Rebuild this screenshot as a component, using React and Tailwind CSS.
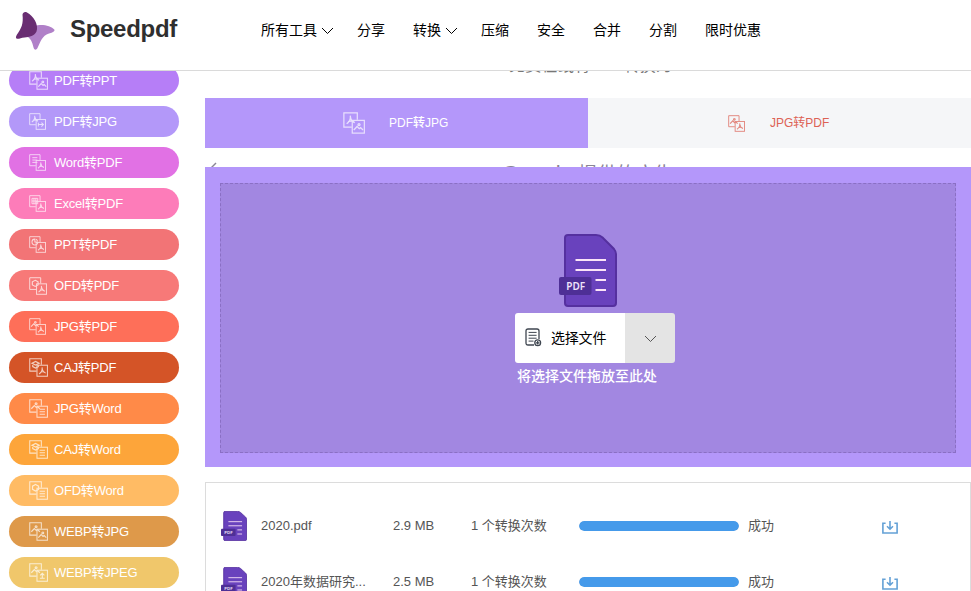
const tools = [
  { name: 'PDF转PPT', color: 'bg-[#b67ef7]', from: 'pdf', to: 'image', size: 19 },
  { name: 'PDF转JPG', color: 'bg-[#b398f9]', from: 'pdf', to: 'arrow', size: 17 },
  { name: 'Word转PDF', color: 'bg-[#e171e4]', from: 'doc', to: 'pdf', size: 17 },
  { name: 'Excel转PDF', color: 'bg-[#fd7cb9]', from: 'excel', to: 'pdf', size: 17 },
  { name: 'PPT转PDF', color: 'bg-[#f27476]', from: 'ppt', to: 'pdf', size: 17 },
  { name: 'OFD转PDF', color: 'bg-[#f77978]', from: 'ofd', to: 'pdf', size: 18 },
  { name: 'JPG转PDF', color: 'bg-[#fe6f59]', from: 'image', to: 'pdf', size: 17 },
  { name: 'CAJ转PDF', color: 'bg-[#d45427]', from: 'caj', to: 'pdf', size: 19 },
  { name: 'JPG转Word', color: 'bg-[#ff8a48]', from: 'image', to: 'doc', size: 19 },
  { name: 'CAJ转Word', color: 'bg-[#fda53a]', from: 'caj', to: 'doc', size: 19 },
  { name: 'OFD转Word', color: 'bg-[#ffbb64]', from: 'ofd', to: 'doc', size: 19 },
  { name: 'WEBP转JPG', color: 'bg-[#de994a]', from: 'image', to: 'image', size: 19 },
  { name: 'WEBP转JPEG', color: 'bg-[#f0c76b]', from: 'image', to: 'jpeg', size: 19 },
];

const files = [
  { name: '2020.pdf', size: '2.9 MB', progress: 100 },
  { name: '2020年数据研究...', size: '2.5 MB', progress: 100 },
];

// Marks drawn inside a 10x10 square
const glyphs = {
  pdf: <path d="M1.6 8.4 C3.6 7 5.2 4 4.8 1.4 M4.8 2.4 C5.2 5 6.6 6.8 8.6 7.4 M2.8 6.8 C4.5 5.8 6.2 5.8 8 6.8" strokeWidth="1.2" />,
  doc: <path d="M2.2 2.4 H7.8 M2.2 5 H7.8 M2.2 7.6 H7.8" />,
  excel: <path d="M1.8 2 H8.2 V8 H1.8 Z M1.8 5 H8.2 M4 2 V8 M6.1 2 V8" />,
  ppt: <path d="M5 1.8 A3.2 3.2 0 1 0 8.2 5 H5 Z M6.4 1.8 L8 3.6" strokeWidth="1.2" />,
  ofd: <path d="M5 1.8 L8 3.4 V6.6 L5 8.2 L2 6.6 V3.4 Z" strokeWidth="1.2" />,
  caj: <path d="M1.4 3.6 L5 1.8 L8.6 3.6 L5 5.4 Z M2.2 5.2 V6.8 L5 8.2 L7.8 6.8 V5.2" strokeWidth="1.2" />,
  image: <path d="M0.8 8 L3.8 4.8 L5.8 6.8 L7 5.8 L9.2 8 M5.6 2.2 A0.9 0.9 0 1 1 5.5 2.2" strokeWidth="1.2" />,
  arrow: <path d="M2 5.2 H7.8 M5.6 2.8 L8 5.2 L5.6 7.6 M2 3 V7.4" strokeWidth="1.2" />,
  jpeg: <path d="M2.4 7.6 H7.6 M5 2.4 V7.6 M2.8 4.6 L5 2.4 L7.2 4.6" strokeWidth="1.2" />,
};

const ConvertIcon = ({ from, to, size = 19, className = '' }) => (
  <svg
    width={size}
    height={size}
    viewBox="0 0 20 20"
    fill="none"
    stroke="currentColor"
    strokeWidth="1.1"
    className={className}
  >
    <path d="M8 13.8 H0.8 V0.8 H13 V7" />
    <g transform="translate(1.6 1.8) scale(1.06)">{glyphs[from]}</g>
    <rect x="8.4" y="7.6" width="11" height="11.6" />
    <g transform="translate(9 8.4)">{glyphs[to]}</g>
  </svg>
);

const Logo = () => (
  <svg width="41" height="40" viewBox="0 0 41 40" className="shrink-0">
    <path
      d="M20 15 C25 12.8 36 14 39.5 18.8 C40 20.3 38 21.5 34 22.5 C27 24.5 25.5 31 22.5 37 C21.3 39.2 19.5 39.2 18.7 37 C17.5 33 17 29 13 26 Z"
      fill="#b080c8"
    />
    <path
      d="M7.5 3.5 C8 1 10 .4 12 1.4 C18.5 5 24 13.5 21.5 20.5 C19.5 25 14.5 26 9.5 26.5 C6 26.8 4.5 28 2 27.8 C.5 27.3 .7 25.5 2 23.5 C6.5 17 8.5 13 7.5 3.5 Z"
      fill="#692d72"
    />
  </svg>
);

const Chevron = ({ className = '' }) => (
  <svg width="13" height="8" viewBox="0 0 13 8" fill="none" stroke="currentColor" className={className}>
    <path d="M1 1 L6.5 6.5 L12 1" />
  </svg>
);

const PdfFile = ({ width, height }) => (
  <svg width={width} height={height} viewBox="0 0 58 73" preserveAspectRatio="none" className="shrink-0">
    <path
      d="M9 1 H37 Q41 1 43.5 3.5 L55 15 Q57 17.5 57 20 V69 Q57 72 54 72 H9 Q6 72 6 69 V4 Q6 1 9 1 Z"
      fill="#6942bd"
      stroke="#55309f"
      strokeWidth="2"
    />
    <path d="M16.5 26 H47 M16.5 36 H47 M36.5 46 H47 M36.5 56 H47" stroke="#fbe4f8" strokeWidth="2" />
    <rect x="0" y="43" width="32.5" height="18" rx="2" fill="#4e2f96" />
    <text
      x="16.7"
      y="56"
      textAnchor="middle"
      fontSize="10"
      fontWeight="600"
      fontFamily="Noto Sans, sans-serif"
      fill="#eee3fb"
    >
      PDF
    </text>
  </svg>
);

const SelectIcon = () => (
  <svg width="17" height="19" viewBox="0 0 17 19" fill="none" stroke="#3f4650" strokeWidth="1.3" className="-mt-[2px]">
    <path d="M9 17 H3 Q1 17 1 15 V3 Q1 1 3 1 H12 Q14 1 14 3 V11" />
    <path d="M3.6 4.4 H11.6 M3.6 7.3 H11.6 M3.6 10.2 H11.6 M3.6 13.1 H8.5" strokeWidth="1" />
    <circle cx="12.7" cy="14.8" r="2.9" />
    <path d="M12.7 13 V16.6 M10.9 14.8 H14.5" />
  </svg>
);

const DownloadIcon = () => (
  <svg width="16" height="13" viewBox="0 0 16 13" fill="none" stroke="#64a1d6" strokeWidth="1.6">
    <path d="M3.6 2.3 H0.9 V12 H15.1 V2.3 H12.4" />
    <path d="M8 0 V8 M5 5.2 L8 8.2 L11 5.2" />
  </svg>
);

const Header = () => (
  <header className="flex h-[71px] shrink-0 border-b border-[#dadada] bg-white">
    <div className="flex w-[261px] items-start pt-[11px] pl-[15px]">
      <Logo />
      <span className="ml-[14px] text-[24px] leading-[36px] font-bold tracking-[-0.3px] text-[#2f2f2f]">
        Speedpdf
      </span>
    </div>
    <nav className="flex h-[60px] items-center text-[14px] text-black">
      <a className="mr-[23px] flex items-center">
        所有工具
        <Chevron className="mt-[2px] ml-1" />
      </a>
      <a className="mr-7">分享</a>
      <a className="mr-[23px] flex items-center">
        转换
        <Chevron className="mt-[2px] ml-1" />
      </a>
      <a className="mr-7">压缩</a>
      <a className="mr-7">安全</a>
      <a className="mr-7">合并</a>
      <a className="mr-7">分割</a>
      <a>限时优惠</a>
    </nav>
  </header>
);

const Sidebar = () => (
  <aside className="-mt-[6px] flex w-[205px] shrink-0 flex-col gap-[10px] pl-[9px]">
    {tools.map((tool) => (
      <a
        key={tool.name}
        className={`flex h-[31px] w-[170px] shrink-0 items-center rounded-full pl-5 text-[13px] tracking-[-0.2px] text-white ${tool.color}`}
      >
        <span className="w-[25px] opacity-70">
          <ConvertIcon from={tool.from} to={tool.to} size={tool.size} />
        </span>
        {tool.name}
      </a>
    ))}
  </aside>
);

const DropZone = () => (
  <div className="h-[300px] bg-[#b497fa] px-[15px] pt-4 pb-[14px]">
    <div className="flex h-[270px] flex-col items-center border border-dashed border-[#8a6fc4] bg-[#a287e1] pt-[50px]">
      <PdfFile width={58} height={73} />
      <div className="mt-[6px] ml-[14px] flex h-[50px] w-[160px] overflow-hidden rounded-[3px]">
        <button className="flex w-[110px] items-center bg-white pl-[10px] text-[14px] text-black">
          <SelectIcon />
          <span className="ml-[9px] tracking-[-0.2px]">选择文件</span>
        </button>
        <button className="flex w-[50px] items-center justify-center bg-[#e4e4e4] pt-[2px] text-[#555]">
          <Chevron />
        </button>
      </div>
      <p className="mt-[3px] mr-[2px] text-[14px] leading-5 font-medium text-white">将选择文件拖放至此处</p>
    </div>
  </div>
);

const FileList = () => (
  <div className="mt-[15px] h-[150px] border border-[#dcdcdc] bg-white pt-[15px]">
    {files.map((file) => (
      <div key={file.name} className="flex h-14 items-center pl-[15px] text-[13px] text-[#555]">
        <PdfFile width={26} height={30} />
        <span className="ml-[14px] w-[132px] whitespace-nowrap">{file.name}</span>
        <span className="w-[78px]">{file.size}</span>
        <span className="w-[108px]">1 个转换次数</span>
        <div className="h-[10px] w-40 overflow-hidden rounded-full bg-gray-200">
          <div className="h-full rounded-full bg-[#459aea]" style={{ width: `${file.progress}%` }} />
        </div>
        <span className="ml-[9px] w-[134px]">成功</span>
        <span className="pt-[2px]">
          <DownloadIcon />
        </span>
      </div>
    ))}
  </div>
);

const App = () => {
  return (
    <div className="flex h-[591px] w-[971px] flex-col overflow-hidden bg-white font-['Liberation_Sans','Noto_Sans_CJK_SC',sans-serif]">
      <Header />
      <div className="flex flex-1 overflow-hidden">
        <Sidebar />
        <main className="w-[766px]">
          {/* Subtitle, scrolled under the header */}
          <div className="flex h-[27px] items-start overflow-hidden pl-[304px]">
            <p className="-mt-[15px] text-[16px] leading-5 tracking-[0.3px] whitespace-nowrap text-[#777]">
              免费在线将PDF转换为
            </p>
          </div>

          {/* Tabs */}
          <div className="flex h-[50px] text-[12px]">
            <a className="flex w-[383px] items-center bg-[#b497fa] pl-[138px] font-medium text-white">
              <ConvertIcon from="pdf" to="image" size={22} className="opacity-70" />
              <span className="ml-6">PDF转JPG</span>
            </a>
            <a className="flex w-[383px] items-center bg-[#f5f6f8] pl-[140px] text-[#dd6255]">
              <ConvertIcon from="image" to="pdf" size={17} className="opacity-75" />
              <span className="ml-[25px]">JPG转PDF</span>
            </a>
          </div>

          {/* Ad caption, only its top edge shows */}
          <div className="flex h-[19px] items-start overflow-hidden text-[#8a8595]">
            <svg
              width="12"
              height="24"
              viewBox="0 0 12 24"
              fill="none"
              stroke="currentColor"
              strokeWidth="1.4"
              className="ml-[1px]"
            >
              <path d="M10 15 L2 23" />
            </svg>
            <p className="ml-[284px] pt-[14px] text-[19px] leading-6 whitespace-nowrap">
              <span className="text-[22px]">Google</span> 提供的广告
            </p>
          </div>

          <DropZone />
          <FileList />
        </main>
      </div>
    </div>
  );
};

export default App;
